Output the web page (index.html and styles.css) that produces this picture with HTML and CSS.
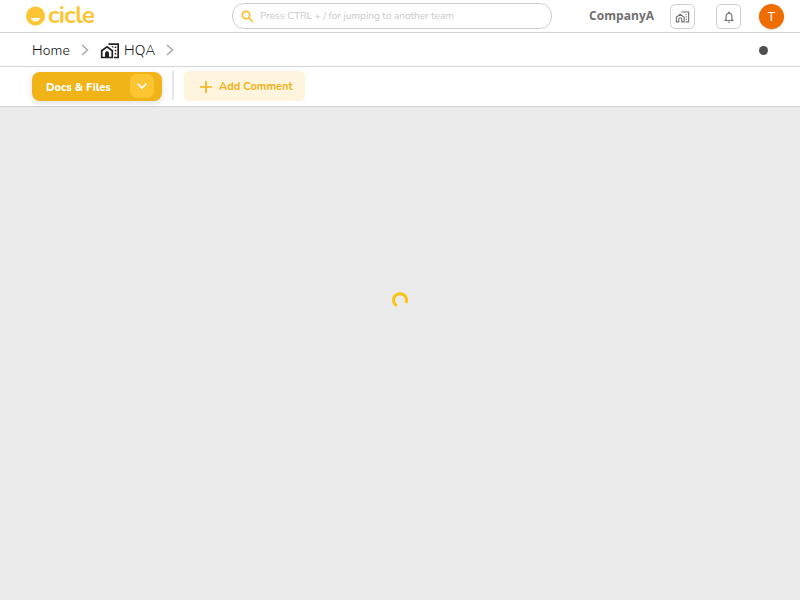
FILE: index.html
```html
<!DOCTYPE html>
<html lang="en">
<head>
<meta charset="utf-8">
<title>Cicle</title>
<link rel="stylesheet" href="styles.css">
</head>
<body>
<svg width="0" height="0" class="defs">
  <symbol id="home-work" viewBox="0 0 20 20"><path d="M1.700 17.500V10.700L7 6.800l5.300 3.900v6.800z" fill="none" stroke="currentColor" stroke-width="1.700"/><path d="M5 18v-4.700a2 2 0 0 1 4 0V18z" fill="currentColor"/><path d="M8.500 4.200h9.700v13.300h-4.200" fill="none" stroke="currentColor" stroke-width="1.700"/><path d="M11.600 6.300h1.700v1.700l-1.700-1.200zM14.700 6.500h1.600v1.600h-1.600zM14.700 9.700h1.600v1.600h-1.600zM14.700 12.900h1.600v1.600h-1.600z" fill="currentColor"/></symbol>
</svg>
<header class="topbar">
  <a class="logo">
    <svg width="20" height="20" viewBox="0 0 20 20"><circle cx="10.500" cy="10" r="9.500" fill="#fdc532"/><path d="M5.700 12h9.600c-.6 2.300-2.400 3.400-4.800 3.400s-4.200-1.100-4.800-3.400z" fill="#fff"/></svg>
    <span class="logo-text">cicle</span>
  </a>
  <div class="search">
    <svg width="13" height="13" viewBox="0 0 13 13" fill="none" stroke="#fdc02b" stroke-width="1.700"><circle cx="5" cy="5" r="3.700"/><path d="M7.700 7.700l4.300 4.300"/></svg>
    <span class="search-text">Press CTRL + / for jumping to another team</span>
  </div>
  <div class="account">
    <span class="company">CompanyA</span>
    <button class="icon-button"><svg width="15" height="15" viewBox="0 0 20 20" fill="none" stroke="#707070" stroke-width="1.500"><path d="M1.800 17.200V11L7 7l5.200 4v6.200H9v-3.600a2 2 0 0 0-4 0v3.600z"/><path d="M8.500 4h9.700v13.200h-4"/><path d="M15 6.500v1.600M15 9.700v1.600M15 12.900v1.600"/></svg></button>
    <button class="icon-button bell"><svg width="14" height="14" viewBox="0 0 24 24"><path d="M12 22c1.100 0 2-.9 2-2h-4c0 1.100.9 2 2 2zm6-6v-5c0-3.070-1.630-5.640-4.500-6.320V4c0-.83-.67-1.500-1.500-1.500s-1.500.67-1.500 1.500v.68C7.640 5.360 6 7.920 6 11v5l-2 2v1h16v-1l-2-2zm-2 1H8v-6c0-2.480 1.510-4.500 4-4.500s4 2.020 4 4.500v6z"/></svg></button>
    <span class="avatar">T</span>
  </div>
</header>
<nav class="breadcrumb">
  <span class="crumb home">Home</span>
  <svg class="chevron" width="8" height="12" viewBox="0 0 8 12"><path d="M1 1l5.500 5L1 11"/></svg>
  <svg class="team-icon" width="20" height="20"><use href="#home-work"/></svg>
  <span class="crumb team">HQA</span>
  <svg class="chevron" width="8" height="12" viewBox="0 0 8 12"><path d="M1 1l5.500 5L1 11"/></svg>
  <span class="status"></span>
</nav>
<div class="toolbar">
  <button class="docs"><span class="docs-text">Docs &amp; Files</span><span class="toggle"><svg width="10" height="6" viewBox="0 0 10 6" fill="none" stroke="#fff" stroke-width="1.700"><path d="M.7.7L5 5 9.300.7"/></svg></span></button>
  <span class="divider"></span>
  <button class="comment"><svg width="12" height="12" viewBox="0 0 12 12" stroke="#f0b418" stroke-width="1.700"><path d="M6 0v12M0 6h12"/></svg><span class="comment-text">Add Comment</span></button>
</div>
<main class="content">
  <svg width="16" height="16" viewBox="0 0 16 16" fill="none" stroke="#ffc20e" stroke-width="2.900"><path d="M4.900 13.800A6.500 6.500 0 1 1 13.900 11"/></svg>
</main>
</body>
</html>
```
FILE: styles.css
```css
* { box-sizing: border-box; }
body {
  margin: 0;
  height: 100vh;
  display: flex;
  flex-direction: column;
  background: #ebebeb;
  font-family: Nunito, "Open Sans", "Noto Sans", sans-serif;
  overflow: hidden;
}
.defs { position: absolute; }
svg { flex: none; display: block; }
span { white-space: nowrap; }
button { font: inherit; margin: 0; padding: 0; border: 0; display: flex; align-items: center; }
.topbar {
  height: 33px;
  flex: none;
  display: flex;
  background: #fff;
  border-bottom: 1px solid #d3d3d3;
  padding: 0 16px 0 25px;
}
.logo { display: flex; width: 207px; padding-top: 6px; gap: 3px; }
.logo-text {
  color: #fdc532;
  font: 700 24px/19px Nunito, Lato, sans-serif;
  letter-spacing: -0.55px;
}
.search {
  width: 320px;
  height: 26px;
  margin-top: 3px;
  border: 1px solid #d0d0d0;
  border-radius: 12px;
  display: flex;
  align-items: center;
  padding-left: 8px;
  gap: 6px;
  color: #c9c9c9;
  font-size: 10px;
}
.account { display: flex; margin-left: 37px; padding-top: 4px; }
.company {
  width: 81px;
  color: #707070;
  font: 700 12px/24px "Open Sans", sans-serif;
  letter-spacing: 0.05px;
}
.icon-button {
  width: 25px;
  height: 25px;
  justify-content: center;
  border: 1px solid #d0d0d0;
  border-radius: 5px;
  background: #fff;
  fill: #707070;
}
.bell { margin: 0 18px 0 21px; }
.avatar {
  width: 25px;
  height: 25px;
  border-radius: 50%;
  background: #ef6c00;
  color: #fff;
  font: 13px/26px Roboto, sans-serif;
  text-align: center;
  box-shadow: 0 1px 2px #0003;
}
.breadcrumb {
  height: 34px;
  flex: none;
  display: flex;
  align-items: center;
  padding: 0 32px;
  background: #fff;
  border-bottom: 1px solid #d3d3d3;
}
.crumb { color: #111; font-size: 14px; font-weight: 300; letter-spacing: 0.15px; line-height: 20px; padding-top: 2px; }
.home { width: 49px; }
.team { width: 42px; }
.chevron { fill: none; stroke: #aaa; stroke-width: 1.5; margin-top: 1px; }
.team-icon { margin: 0 4px 0 11px; color: #222; }
.status { width: 9px; height: 9px; margin: 1px 0 0 auto; border-radius: 50%; background: #4f4f4f; }
.toolbar {
  height: 40px;
  flex: none;
  display: flex;
  padding: 4px 32px 0;
  background: #fff;
  border-bottom: 1px solid #d3d3d3;
  font-size: 11px;
  font-weight: 700;
}
.docs {
  width: 130px;
  height: 29px;
  margin-top: 1px;
  padding: 0 8px 0 14px;
  justify-content: space-between;
  border-radius: 8px;
  background: #f0b418;
  color: #fff;
  box-shadow: 0 2px 6px #0002;
}
.docs-text { font-weight: 800; padding-top: 1px; }
.toggle { width: 24px; height: 24px; margin-top: -1px; border-radius: 7px; background: #fdc532; display: flex; align-items: center; justify-content: center; }
.divider { width: 2px; height: 29px; margin: 0 10px; background: #e7e7e7; }
.comment { width: 121px; height: 30px; padding-left: 16px; gap: 7px; border-radius: 5px; background: #fff5df; color: #f0b418; }
.comment svg { margin-top: 2px; }
.content { flex: 1; padding: 185px 0 0 392px; }
```
